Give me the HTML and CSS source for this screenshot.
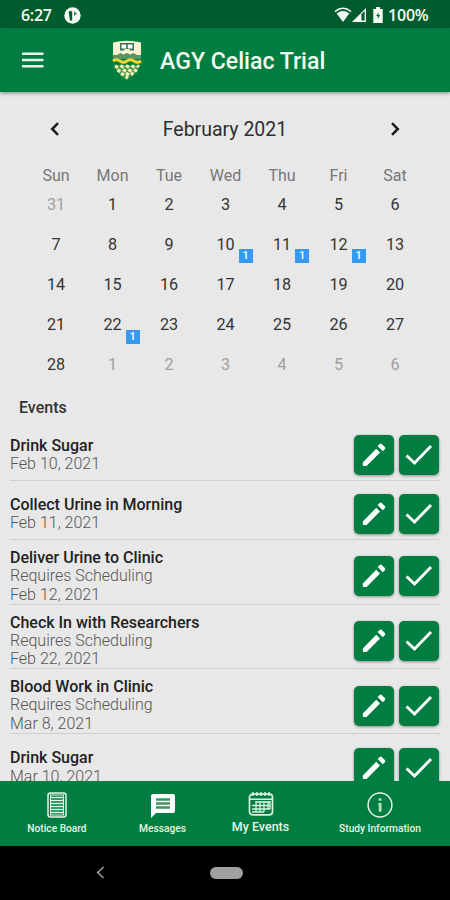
FILE: index.html
```html
<!DOCTYPE html>
<html lang="en">
<head>
<meta charset="utf-8">
<title>AGY Celiac Trial</title>
<link rel="stylesheet" href="styles.css">
</head>
<body>
<svg width="0" height="0" class="defs">
  <symbol id="pencil" viewBox="0 0 24 24"><path d="M.8 19.400V22q0 1 1 1h2.800L18 9.600 14.200 5.800zM22.800 6.300a1.600 1.600 0 0 0 0-2.200l-3-3a1.600 1.600 0 0 0-2.200 0L15.600 3.100 20.800 8.300z"/></symbol>
  <symbol id="check" viewBox="0 0 28 22"><path d="M1.500 11.500l8 7.500L26 2" fill="none" stroke="#fff" stroke-width="2.9"/></symbol>
</svg>
<div class="screen">
  <div class="status">
    <span class="clock">6:27</span>
    <svg class="notif" width="17" height="17" viewBox="0 0 17 17"><circle cx="8.5" cy="8.5" r="8.2" fill="#f4fbf5"/><path d="M4.600 4.600q2-1.200 3.600 0v8.800H6zM10.2 4.600h1v1.600h1.600v1h-1.600v1.200h-1z" fill="#005b2d"/></svg>
    <svg class="wifi" width="18" height="16" viewBox="0 0 18 16"><path d="M1 4.6Q9-2 17 4.6" fill="none" stroke="#f4fbf5" stroke-width="1.5"/><path d="M2.7 6.4Q9 1.8 15.3 6.4L9 15z" fill="#f4fbf5"/></svg>
    <svg class="signal" width="16" height="16" viewBox="0 0 16 16"><path d="M1 15L15 1v14z" fill="#f4fbf5"/><path d="M10.4 7.2l3.2-3.2v9.6h-3.2z" fill="#005b2d"/></svg>
    <svg class="battery" width="10" height="16" viewBox="0 0 10 16"><path d="M3 0h4v2h2.7v14H.3V2H3z" fill="#f4fbf5"/><path d="M5.5 5.500L3.200 9h1.500v3l2.500-4H5.5z" fill="#005b2d"/></svg>
    <span class="percent">100%</span>
  </div>
  <header class="appbar">
    <svg class="menu" width="22" height="16" viewBox="0 0 22 16"><path d="M0 1.7h21.5M0 8h21.5M0 14.3h21.5" stroke="#e9f8e9" stroke-width="2.6"/></svg>
    <svg class="crest" width="30" height="40" viewBox="0 0 30 40">
      <path d="M1 2.500Q15-1 29 2.500v14l-4 2-3-2-4 2-3-2-3 2-4-2-3 2-4-2z" fill="#fbf3cf"/>
      <path d="M8 3h14v7.500h-3.500L17 9h-4l-1.500 1.500H8z" fill="#35755d"/><path d="M9.500 4.500h4.700v4H9.500zM15.800 4.500h4.700v4h-4.700z" fill="#fff"/>
      <path d="M1 15l4 0 3.500-2 3 1.500 3.500-1.500 3.500 1.500 3-1.500 3.500 2h4v4H1z" fill="#579565"/>
      <path d="M1 21q3.500-2.500 7 0t7 0 7 0 7 0" fill="none" stroke="#f7d629" stroke-width="3"/>
      <path d="M2 25h26l-3 7-10 7.500L5 32z" fill="#3b924b"/>
      <path d="M3 26l3 1.500M8.500 25.500l3 2M14 25.500l3 2M19.500 25.500l3 2M25 25.500l2 1.500M5.500 30l3 1.500M11 29.500l3 2M16.500 29.500l3 2M22 29.500l3 2M9 33.500l3 1.500M14 33l3 2M19 33l2.500 1.500M13.500 36.500l2.500 1.500" stroke="#f7f0b0" stroke-width="3.300"/>
    </svg>
    <h1 class="title">AGY Celiac Trial</h1>
  </header>
  <main class="content">
    <div class="month">
      <svg width="10" height="14" viewBox="0 0 10 14"><path d="M8 1.200L2.200 7 8 12.800" fill="none" stroke="#1c1c1c" stroke-width="2.500"/></svg>
      <span class="month-name">February 2021</span>
      <svg width="10" height="14" viewBox="0 0 10 14"><path d="M2 1.200L7.800 7 2 12.800" fill="none" stroke="#1c1c1c" stroke-width="2.500"/></svg>
    </div>
    <div class="week names"><span>Sun</span><span>Mon</span><span>Tue</span><span>Wed</span><span>Thu</span><span>Fri</span><span>Sat</span></div>
    <div class="week"><span class="out">31</span><span>1</span><span>2</span><span>3</span><span>4</span><span>5</span><span>6</span></div>
    <div class="week"><span>7</span><span>8</span><span>9</span><span>10<b class="badge">1</b></span><span>11<b class="badge">1</b></span><span>12<b class="badge">1</b></span><span>13</span></div>
    <div class="week"><span>14</span><span>15</span><span>16</span><span>17</span><span>18</span><span>19</span><span>20</span></div>
    <div class="week"><span>21</span><span>22<b class="badge">1</b></span><span>23</span><span>24</span><span>25</span><span>26</span><span>27</span></div>
    <div class="week"><span>28</span><span class="out">1</span><span class="out">2</span><span class="out">3</span><span class="out">4</span><span class="out">5</span><span class="out">6</span></div>
    <h2 class="heading">Events</h2>
    <div class="list">
      <div class="event"><div class="info"><h3>Drink Sugar</h3><p>Feb 10, 2021</p></div><button class="action"><svg class="pencil"><use href="#pencil"/></svg></button><button class="action"><svg class="check"><use href="#check"/></svg></button></div>
      <div class="event"><div class="info"><h3>Collect Urine in Morning</h3><p>Feb 11, 2021</p></div><button class="action"><svg class="pencil"><use href="#pencil"/></svg></button><button class="action"><svg class="check"><use href="#check"/></svg></button></div>
      <div class="event tall"><div class="info"><h3>Deliver Urine to Clinic</h3><p>Requires Scheduling</p><p>Feb 12, 2021</p></div><button class="action"><svg class="pencil"><use href="#pencil"/></svg></button><button class="action"><svg class="check"><use href="#check"/></svg></button></div>
      <div class="event tall"><div class="info"><h3>Check In with Researchers</h3><p>Requires Scheduling</p><p>Feb 22, 2021</p></div><button class="action"><svg class="pencil"><use href="#pencil"/></svg></button><button class="action"><svg class="check"><use href="#check"/></svg></button></div>
      <div class="event tall"><div class="info"><h3>Blood Work in Clinic</h3><p>Requires Scheduling</p><p>Mar 8, 2021</p></div><button class="action"><svg class="pencil"><use href="#pencil"/></svg></button><button class="action"><svg class="check"><use href="#check"/></svg></button></div>
      <div class="event"><div class="info"><h3>Drink Sugar</h3><p>Mar 10, 2021</p></div><button class="action"><svg class="pencil"><use href="#pencil"/></svg></button><button class="action"><svg class="check"><use href="#check"/></svg></button></div>
    </div>
  </main>
  <nav class="tabs">
    <div class="tab">
      <svg width="20" height="26" viewBox="0 0 20 26" fill="none" stroke="#e4f6e6"><rect x="1" y="1" width="18" height="24" rx="2.500" stroke-width="1.500"/><rect x="3.500" y="3" width="13" height="20" stroke-width="1"/><path d="M4 5.500h12M4 8.500h12M4 11.500h12M4 14.500h12M4 17.500h12M4 20.500h12" stroke-width="1.300"/></svg>
      <span>Notice Board</span>
    </div>
    <div class="tab">
      <svg class="bubble" width="24" height="24" viewBox="0 0 24 24"><path d="M2 0h20a2 2 0 0 1 2 2v15a2 2 0 0 1-2 2H5l-5 5V2a2 2 0 0 1 2-2z" fill="#fff"/><path d="M5 5.500h14M5 9.500h14M5 13.500h14" stroke="#3f9360" stroke-width="2.600"/></svg>
      <span>Messages</span>
    </div>
    <div class="tab active">
      <svg width="26" height="24" viewBox="0 0 26 24" fill="none" stroke="#d9f3dc"><rect x="1.500" y="2.200" width="23" height="20.600" rx="3" stroke-width="1.700"/><path d="M1.500 7.300h23M5 0v4M9 0v4M13 0v4M17 0v4M21 0v4" stroke-width="1.500"/><path d="M8 10h14M4 13.500h18M4 17h18M4 20h12M8 9v11M12 9v11M16 9v11M20 9v8M22 9v8" stroke-width="1.300"/></svg>
      <span>My Events</span>
    </div>
    <div class="tab">
      <svg width="26" height="26" viewBox="0 0 26 26"><circle cx="13" cy="13" r="11.900" fill="none" stroke="#e4f6e6" stroke-width="1.500"/><path d="M11.700 6.200h2.800v2.600h-2.800zM11.200 11h3.300v8.700h-2.800v-7.200h-.5z" fill="#b9dfbf"/></svg>
      <span>Study Information</span>
    </div>
  </nav>
  <div class="sysbar">
    <svg width="9" height="13" viewBox="0 0 9 13"><path d="M7.500 1L1.700 6.500l5.800 5.500" fill="none" stroke="#999" stroke-width="1.700"/></svg>
    <i class="pill"></i>
  </div>
</div>
</body>
</html>
```
FILE: styles.css
```css
* { box-sizing: border-box; margin: 0; padding: 0; }
body { font-family: Roboto, sans-serif; background: #e8e8e8; }
.defs { position: absolute; }
.screen { width: 450px; height: 900px; display: flex; flex-direction: column; overflow: hidden; }

.status { height: 28px; flex: none; background: #005b2d; display: flex; align-items: center; padding: 2px 20px 0 21px; color: #f4fbf5; font: 600 16px/20px "Open Sans", sans-serif; }
.clock { width: 43px; letter-spacing: -0.300px; }
.wifi { margin-left: auto; }
.signal { margin: 0 0 0 -1px; }
.battery { margin: 0 5px 0 6px; }
.percent { width: 42px; font-size: 16px; letter-spacing: -0.200px; }

.appbar { height: 64px; flex: none; background: #007d40; display: flex; align-items: center; padding-left: 21.500px; box-shadow: 0 1px 4px rgba(0,0,0,.45); position: relative; }
.crest { margin-left: 68.500px; }
.title { margin-left: 18px; padding-top: 2px; color: #f1fbf1; font-size: 23.100px; font-weight: 500; white-space: nowrap; }

.content { flex: 1; min-height: 0; overflow: hidden; background: #e8e8e8; }
.month { height: 72.600px; padding: 2px 50px 0 50px; display: flex; align-items: center; justify-content: space-between; color: #2f2f2f; }
.month-name { font-size: 19.500px; }
.week { display: grid; grid-template-columns: repeat(7, 56.500px); margin-left: 27.750px; height: 40.200px; line-height: 40px; text-align: center; font-size: 16.200px; color: #353535; }
.week span { position: relative; }
.week.names { height: 20px; line-height: 22px; color: #777; font-size: 16px; }
.week .out { color: #a0a0a0; }
.badge { position: absolute; left: 41.500px; top: 24.500px; width: 14px; height: 14px; background: #369af5; color: #fff; font: 500 11px/14px Roboto, sans-serif; }
.heading { height: 35.600px; padding: 12.400px 0 0 19px; line-height: 20px; font-size: 16px; font-weight: 500; color: #333; }
.event { height: 59.500px; margin: 0 10px; padding-top: 9px; border-bottom: 1px solid #cfcfcf; display: flex; align-items: center; }
.event.tall { height: 64.600px; }
.info { flex: 1; line-height: 18.300px; font-size: 16px; }
.info h3 { font-size: 16px; font-weight: 500; color: #222; }
.info p { font-weight: 300; color: #555; }
.action { flex: none; width: 40px; height: 40px; margin: 0 1px 0 4px; border: 0; border-radius: 5px; background: #007d40; box-shadow: 0 1px 3px rgba(0,0,0,.4); display: flex; align-items: center; justify-content: center; fill: #fff; }
.pencil { width: 24px; height: 24px; }
.check { width: 28px; height: 22px; }

.tabs { height: 64.500px; flex: none; background: #007d40; display: grid; grid-template-columns: 114px 97px 99px 140px; position: relative; }
.tab { display: flex; flex-direction: column; align-items: center; padding-top: 11px; color: #e4f6e6; font-size: 10.200px; line-height: 14px; font-weight: 500; }
.tab svg { margin-bottom: auto; }
.tab svg.bubble { margin-top: 2px; }
.tab span { padding-bottom: 10px; white-space: nowrap; }
.tab.active span { font-size: 12.500px; padding-bottom: 12px; }
.sysbar { height: 54.500px; flex: none; background: #000; display: flex; align-items: center; padding-left: 96px; }
.pill { width: 33px; height: 12px; border-radius: 6px; background: #a0a0a0; margin-left: 105px; }
```
